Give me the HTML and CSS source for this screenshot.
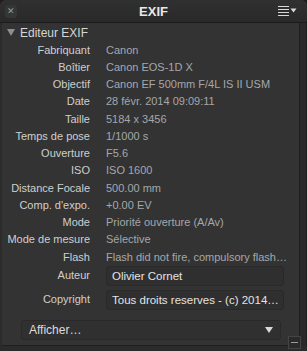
FILE: index.html
```html
<!DOCTYPE html>
<html lang="fr">
  <head>
    <meta charset="UTF-8" />
    <title>EXIF</title>
    <link rel="stylesheet" href="styles.css">
  </head>
  <body>
    <div class="window">
      <div class="titlebar">
        <span class="close-btn">&#x2715;</span>
        <span class="title">EXIF</span>
        <span class="menu-btn">
          <svg width="20" height="12" viewBox="0 0 20 12">
            <g stroke="#d8d8d8" stroke-width="1">
              <line x1="0" y1="0.5" x2="11" y2="0.5" />
              <line x1="0" y1="3.5" x2="11" y2="3.5" />
              <line x1="0" y1="6.5" x2="11" y2="6.5" />
              <line x1="0" y1="9.5" x2="11" y2="9.5" />
            </g>
            <polygon points="12.5,2.5 18.5,2.5 15.5,6.5" fill="#d8d8d8" />
          </svg>
        </span>
      </div>

      <div class="body-row">
        <div class="panel">
          <div class="section-head">
            <span class="disclosure"></span>
            <span>Editeur EXIF</span>
          </div>

          <div class="exif-grid">
            <span class="label">Fabriquant</span><span class="value">Canon</span>
            <span class="label">Boîtier</span><span class="value">Canon EOS-1D X</span>
            <span class="label">Objectif</span><span class="value">Canon EF 500mm F/4L IS II USM</span>
            <span class="label">Date</span><span class="value">28 févr. 2014 09:09:11</span>
            <span class="label">Taille</span><span class="value">5184 x 3456</span>
            <span class="label">Temps de pose</span><span class="value">1/1000 s</span>
            <span class="label">Ouverture</span><span class="value">F5.6</span>
            <span class="label">ISO</span><span class="value">ISO 1600</span>
            <span class="label">Distance Focale</span><span class="value">500.00 mm</span>
            <span class="label">Comp. d'expo.</span><span class="value">+0.00 EV</span>
            <span class="label">Mode</span><span class="value">Priorité ouverture (A/Av)</span>
            <span class="label">Mode de mesure</span><span class="value">Sélective</span>
            <span class="label">Flash</span><span class="value">Flash did not fire, compulsory flash…</span>
          </div>

          <div class="field-grid">
            <span class="label">Auteur</span>
            <div class="text-field">Olivier Cornet</div>
            <span class="label">Copyright</span>
            <div class="text-field">Tous droits reserves - (c) 2014…</div>
          </div>

          <div class="select-box">
            <span>Afficher…</span>
            <span class="select-arrow"></span>
          </div>
        </div>
        <div class="frame-side"></div>
      </div>
      <span class="resize-box"></span>
    </div>
  </body>
</html>
```

FILE: styles.css
```css
body {
  margin: 0;
  background: #1c1c1c;
  font-family: "Liberation Sans", Arial, sans-serif;
}

.window {
  position: relative;
  width: 307px;
  height: 351px;
  background: #2b2b2b;
  border-radius: 6px 6px 0 0;
  overflow: hidden;
  display: flex;
  flex-direction: column;
}

.titlebar {
  height: 22px;
  display: flex;
  align-items: center;
  justify-content: space-between;
  padding: 0 9px 0 5px;
  background: linear-gradient(#303030, #292929);
  border-bottom: 1px solid #1b1b1b;
}

.close-btn {
  width: 12px;
  height: 13px;
  border-radius: 3px;
  background: #363636;
  color: #9a9a9a;
  font-size: 9px;
  line-height: 13px;
  text-align: center;
}

.title {
  color: #e8e8e8;
  font-weight: bold;
  font-size: 13px;
  margin-left: 12px;
}

.menu-btn {
  display: flex;
  padding-top: 1px;
  width: 20px;
}

.body-row {
  display: flex;
  height: 323px;
  padding-left: 2px;
}

.panel {
  width: 297px;
  background: #333333;
  border-right: 1px solid #1f1f1f;
  border-bottom: 1px solid #1f1f1f;
  height: 322px;
}

.frame-side {
  flex: 1;
  background: #292929;
  border-right: 1px solid #1f1f1f;
}

.section-head {
  display: flex;
  align-items: center;
  gap: 5px;
  height: 17px;
  padding: 1px 0 0 5px;
  color: #d6d6d6;
  font-size: 12px;
}

.disclosure {
  width: 0;
  height: 0;
  border-left: 4.5px solid transparent;
  border-right: 4.5px solid transparent;
  border-top: 7px solid #8e8e8e;
}

.exif-grid,
.field-grid {
  display: grid;
  grid-template-columns: 88px minmax(0, 1fr);
  column-gap: 16px;
  font-size: 11px;
}

.exif-grid {
  grid-auto-rows: 17.25px;
  align-items: center;
}

.label {
  text-align: right;
  color: #cfcfcf;
  white-space: nowrap;
}

.value {
  color: #a5a7ab;
  white-space: nowrap;
}

.field-grid {
  margin-top: 1px;
  row-gap: 4px;
  align-items: center;
  margin-right: 15px;
}

.field-grid .label {
  margin-top: -3px;
}

.text-field {
  height: 18px;
  line-height: 18px;
  padding: 0 5px;
  background: #2f2f2f;
  border: 1px solid #292929;
  border-radius: 3px;
  color: #e4e4e4;
  font-size: 11.5px;
  white-space: nowrap;
  overflow: hidden;
}

.select-box {
  margin: 10px 18px 0 19px;
  height: 18px;
  display: flex;
  align-items: center;
  justify-content: space-between;
  padding: 0 7px;
  background: #303030;
  border: 1px solid #292929;
  border-radius: 3px;
  color: #dcdcdc;
  font-size: 12px;
}

.select-arrow {
  width: 0;
  height: 0;
  border-left: 4.5px solid transparent;
  border-right: 4.5px solid transparent;
  border-top: 6px solid #d8d8d8;
}

.resize-box {
  position: absolute;
  left: 288px;
  top: 336px;
  width: 11px;
  height: 11px;
  border: 1px solid #444;
  background: #2a2a2a;
}

.resize-box::after {
  content: "";
  position: absolute;
  left: 2px;
  right: 2px;
  top: 5px;
  height: 1px;
  background: #9a9a9a;
}
```
